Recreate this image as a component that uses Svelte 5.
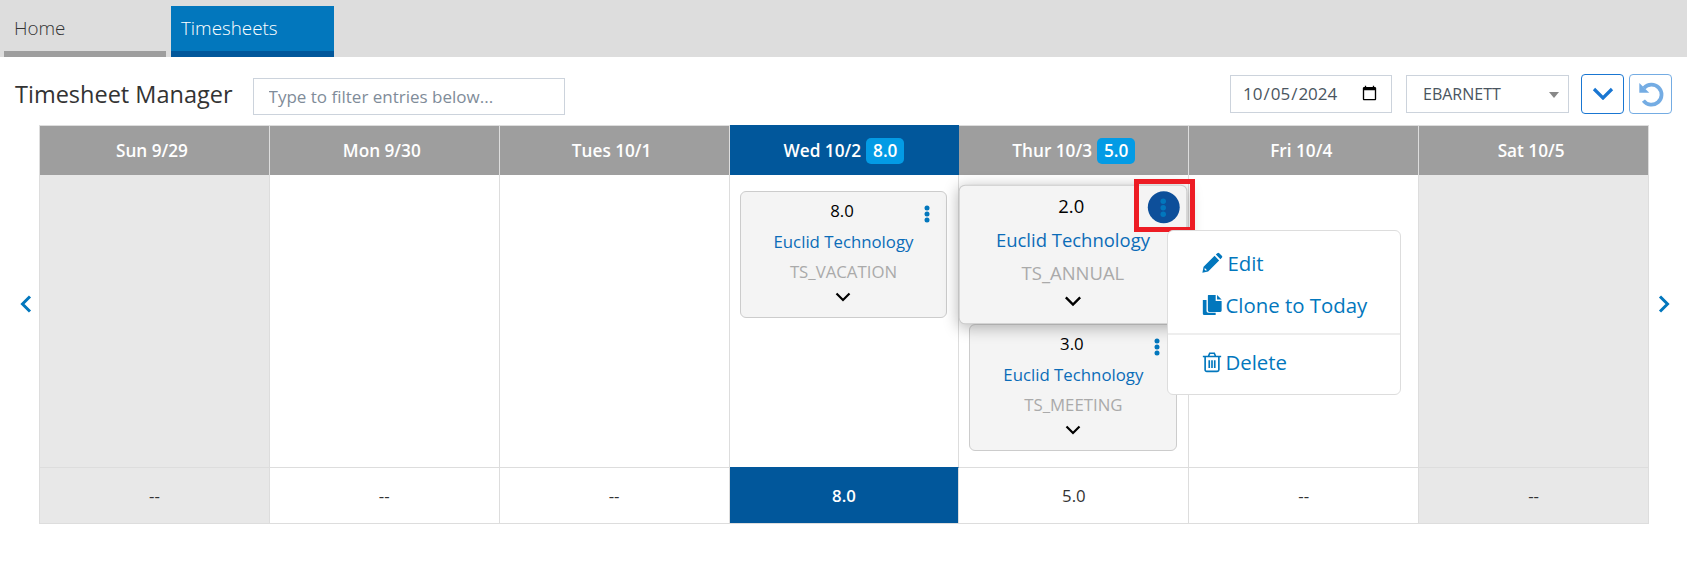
<script>
  const days = [
    { label: 'Sun 9/29', total: '--', weekend: true, entries: [] },
    { label: 'Mon 9/30', total: '--', entries: [] },
    { label: 'Tues 10/1', total: '--', entries: [] },
    {
      label: 'Wed 10/2',
      total: '8.0',
      badge: '8.0',
      today: true,
      entries: [{ hours: '8.0', client: 'Euclid Technology', code: 'TS_VACATION' }]
    },
    {
      label: 'Thur 10/3',
      total: '5.0',
      badge: '5.0',
      menu: true,
      entries: [
        { hours: '2.0', client: 'Euclid Technology', code: 'TS_ANNUAL', active: true },
        { hours: '3.0', client: 'Euclid Technology', code: 'TS_MEETING' }
      ]
    },
    { label: 'Fri 10/4', total: '--', entries: [] },
    { label: 'Sat 10/5', total: '--', weekend: true, entries: [] }
  ];
</script>

<div class="tabs">
  <div class="tab">Home</div>
  <div class="tab selected">Timesheets</div>
</div>

<div class="toolbar">
  <h1>Timesheet Manager</h1>
  <input class="filter" type="text" placeholder="Type to filter entries below..." />
  <input class="date" type="date" value="2024-10-05" />
  <div class="select-wrap">
    <select><option>EBARNETT</option></select>
  </div>
  <button class="tool" aria-label="Expand">
    <svg width="22" height="13" viewBox="0 0 22 13"><path d="M2 2l9 9 9-9" fill="none" stroke="currentColor" stroke-width="3.200" /></svg>
  </button>
  <button class="tool faded" aria-label="Undo">
    <svg width="28" height="28" viewBox="0 0 24 24">
      <path d="M6 6.800A8.600 8.600 0 1 1 5.500 17.600" fill="none" stroke="currentColor" stroke-width="3.200" />
      <path d="M2 2.500v8.500h8.500z" fill="currentColor" />
    </svg>
  </button>
</div>

<div class="calendar">
  <div class="nav left">
    <svg width="12" height="18" viewBox="0 0 12 18"><path d="M10 1.500L2.500 9l7.500 7.500" fill="none" stroke="currentColor" stroke-width="3" /></svg>
  </div>

  <div class="grid">
    {#each days as day}
      <div class="head" class:today={day.today}>
        {day.label}
        {#if day.badge}<span class="badge">{day.badge}</span>{/if}
      </div>
    {/each}

    {#each days as day}
      <div class="body" class:weekend={day.weekend}>
        {#each day.entries as entry}
          <div class="card" class:active={entry.active}>
            <div class="hours">{entry.hours}</div>
            <span class="kebab">
              <svg width="6" height="18" viewBox="0 0 6 18">
                <circle cx="3" cy="3" r="2.500" /><circle cx="3" cy="9" r="2.500" /><circle cx="3" cy="15" r="2.500" />
              </svg>
            </span>
            <div class="client">{entry.client}</div>
            <div class="code">{entry.code}</div>
            <svg class="more" width="16" height="10" viewBox="0 0 16 10"><path d="M1.500 1.500L8 8l6.500-6.500" fill="none" stroke="currentColor" stroke-width="2.200" /></svg>
          </div>
        {/each}

        {#if day.menu}
          <div class="highlight"></div>
          <div class="menu">
            <div class="item edit">
              <svg width="22" height="22" viewBox="0 0 24 24">
                <path d="M1.500 22.500l1.300-6.300L14.800 4.200l5 5L7.800 21.200zM3.800 19.200l1 1 1.800-.4-2.400-2.400z" fill="currentColor" fill-rule="evenodd" />
                <path d="M16.200 2.800l1.600-1.500a1.500 1.500 0 0 1 2.100 0l2.800 2.800a1.500 1.500 0 0 1 0 2.100l-1.500 1.600z" fill="currentColor" />
              </svg>
              Edit
            </div>
            <div class="item">
              <svg width="22" height="22" viewBox="0 0 24 24">
                <path d="M2 6.500h4V18.500a2 2 0 0 0 2 2h8V23H3.500A1.500 1.500 0 0 1 2 21.500z" fill="currentColor" />
                <path d="M8 1h8v6.500h6.500V18a1.500 1.500 0 0 1-1.500 1.500H9A1.500 1.500 0 0 1 7.500 18V1.500z" fill="currentColor" />
                <path d="M17.500 1l5 5h-5z" fill="currentColor" />
              </svg>
              Clone to Today
            </div>
            <div class="rule"></div>
            <div class="item">
              <svg width="22" height="22" viewBox="0 0 24 24" fill="none" stroke="currentColor" stroke-width="1.800">
                <path d="M2 6h20M8 6l1.500-3.500h5L16 6M4.500 6v14.500A1.800 1.800 0 0 0 6.300 22.300h11.400a1.800 1.800 0 0 0 1.800-1.800V6M9 10v8.500M12 10v8.500M15 10v8.500" />
              </svg>
              Delete
            </div>
          </div>
        {/if}
      </div>
    {/each}

    {#each days as day}
      <div class="foot" class:weekend={day.weekend} class:today={day.today}>{day.total}</div>
    {/each}
  </div>

  <div class="nav right">
    <svg width="12" height="18" viewBox="0 0 12 18"><path d="M2 1.500L9.500 9 2 16.500" fill="none" stroke="currentColor" stroke-width="3" /></svg>
  </div>
</div>

<style>
  :global(body) {
    background: #fff;
    font-family: 'Open Sans', sans-serif;
    color: #333;
  }

  .tabs {
    display: flex;
    align-items: flex-end;
    gap: 5px;
    height: 57px;
    padding-left: 4px;
    background: #ddd;
  }

  .tab {
    box-sizing: border-box;
    width: 162px;
    height: 51px;
    padding: 9px 10px 0;
    border-bottom: 6px solid #9e9e9e;
    font-size: 18.800px;
    font-weight: 300;
    color: #333;
  }

  .tab.selected {
    background: #0277bd;
    border-bottom-color: #01579b;
    color: #fff;
    width: 163px;
  }

  .toolbar {
    box-sizing: border-box;
    display: flex;
    align-items: center;
    height: 68px;
    padding: 5px 0 0 15px;
  }

  h1 {
    margin: 0 20px 0 0;
    font-size: 23.500px;
    font-weight: 500;
    color: #333;
  }

  input,
  select {
    box-sizing: border-box;
    height: 38px;
    background: #fff;
    border: 1px solid #ccd3dc;
    font-family: inherit;
    font-size: 17px;
    color: #4a5560;
    outline: none;
  }

  .filter {
    width: 312px;
    height: 37px;
    margin-top: 6px;
    padding: 0 15px;
  }

  .filter::placeholder {
    color: #7f8c99;
  }

  .date {
    width: 162px;
    margin-left: auto;
    padding: 0 11px;
  }

  .select-wrap {
    position: relative;
    margin: 0 12px 0 14px;
  }

  .select-wrap::after {
    content: '';
    position: absolute;
    right: 10px;
    top: 17px;
    border: 5px solid transparent;
    border-top: 6px solid #888;
    border-bottom: 0;
  }

  select {
    display: block;
    width: 163px;
    padding: 0 16px;
    font-size: 16px;
    appearance: none;
  }

  .tool {
    box-sizing: border-box;
    display: flex;
    align-items: center;
    justify-content: center;
    width: 43px;
    height: 40px;
    margin-right: 5px;
    padding: 0;
    background: #fff;
    border: 1px solid #1976d2;
    border-radius: 4px;
    color: #1976d2;
  }

  .tool.faded {
    margin-right: 15px;
    opacity: 0.6;
  }

  .calendar {
    display: flex;
  }

  .nav {
    box-sizing: border-box;
    display: flex;
    align-items: center;
    width: 38px;
    padding-bottom: 42px;
    color: #0277bd;
  }

  .nav.left {
    width: 39px;
    justify-content: flex-end;
    padding-right: 7px;
  }

  .nav.right {
    padding-left: 9px;
  }

  .grid {
    flex: none;
    display: grid;
    grid-template-columns: repeat(7, 1fr);
    grid-template-rows: 50px 292px 57px;
    width: 1610px;
    box-sizing: border-box;
    border-left: 1px solid #ddd;
  }

  .head {
    display: flex;
    align-items: center;
    justify-content: center;
    gap: 5px;
    padding-right: 5px;
    border-top: 1px solid #ddd;
    border-right: 1px solid #ddd;
    background: #9e9e9e;
    font-size: 17.200px;
    font-weight: 600;
    color: #fff;
  }

  .head.today {
    background: #01579b;
    border-color: #01579b;
  }

  .badge {
    margin-right: -5px;
    padding: 0 7px;
    height: 26px;
    line-height: 26px;
    background: #039be5;
    border-radius: 5px;
  }

  .body {
    position: relative;
    padding: 16px 11px 0 10px;
    border-right: 1px solid #ddd;
  }

  .weekend {
    background: #e8e8e8;
  }

  .card {
    position: relative;
    box-sizing: border-box;
    height: 127px;
    margin-bottom: 6px;
    padding-top: 5px;
    background: #f4f4f4;
    border: 1px solid #ccc;
    border-radius: 6px;
    font-size: 16.800px;
    line-height: 30px;
    text-align: center;
  }

  .card.active {
    z-index: 2;
    transform: scale(1.1);
    box-shadow: 0 3px 14px rgba(0, 0, 0, 0.28);
  }

  .hours {
    margin: -1px 3px 1px 0;
    color: #000;
  }

  .kebab {
    position: absolute;
    top: 7px;
    right: 5px;
    display: flex;
    align-items: center;
    justify-content: center;
    width: 29px;
    height: 29px;
    border-radius: 50%;
    fill: #0277bd;
  }

  .active .kebab {
    top: 5px;
    right: 6px;
    background: #0d4f9a;
  }

  .client {
    color: #0b6cb8;
  }

  .code {
    color: #aaa;
  }

  .more {
    display: block;
    margin: 5px auto 0;
    color: #000;
  }

  .highlight {
    position: absolute;
    z-index: 3;
    left: 175px;
    top: 4px;
    box-sizing: border-box;
    width: 61px;
    height: 53px;
    border: 5px solid #ed1c24;
  }

  .menu {
    position: absolute;
    z-index: 3;
    left: 208px;
    top: 55px;
    box-sizing: border-box;
    width: 234px;
    height: 165px;
    padding-top: 11px;
    background: #fff;
    border: 1px solid #ddd;
    border-radius: 6px;
  }

  .item {
    display: flex;
    align-items: center;
    gap: 2px;
    height: 42px;
    padding-left: 33px;
    font-size: 20.400px;
    color: #0277bd;
  }

  .item.edit {
    gap: 4px;
  }

  .rule {
    height: 2px;
    margin: 7px 0 6px;
    background: #eee;
  }

  .foot {
    display: flex;
    align-items: center;
    justify-content: center;
    border-top: 1px solid #ddd;
    border-right: 1px solid #ddd;
    border-bottom: 1px solid #ddd;
    font-size: 16.800px;
    color: #333;
  }

  .foot.today {
    background: #01579b;
    border-top-color: #01579b;
    font-weight: 600;
    color: #fff;
  }
</style>
